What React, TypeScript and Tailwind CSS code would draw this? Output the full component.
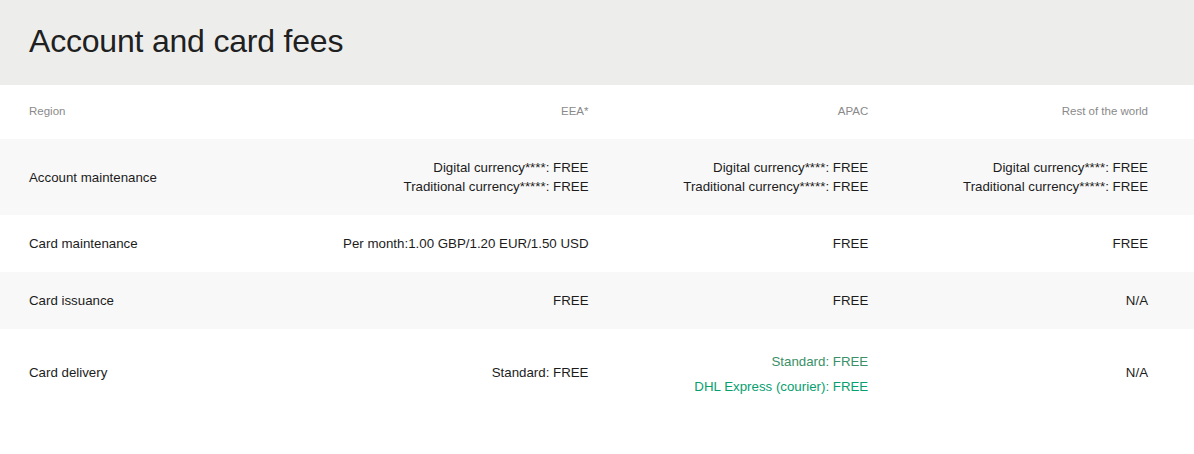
import React from 'react';

type Row = {
  label: string;
  cells: React.ReactNode[];
  shaded: boolean;
  height: string;
};

function Lines({ items }: { items: string[] }) {
  return (
    <div className="flex flex-col items-end">
      {items.map((t) => (
        <span key={t}>{t}</span>
      ))}
    </div>
  );
}

const accountLines = ['Digital currency****: FREE', 'Traditional currency*****: FREE'];

const rows: Row[] = [
  {
    label: 'Account maintenance',
    shaded: true,
    height: 'h-[76px]',
    cells: [<Lines items={accountLines} />, <Lines items={accountLines} />, <Lines items={accountLines} />],
  },
  {
    label: 'Card maintenance',
    shaded: false,
    height: 'h-[57px]',
    cells: ['Per month:1.00 GBP/1.20 EUR/1.50 USD', 'FREE', 'FREE'],
  },
  {
    label: 'Card issuance',
    shaded: true,
    height: 'h-[57px]',
    cells: ['FREE', 'FREE', 'N/A'],
  },
  {
    label: 'Card delivery',
    shaded: false,
    height: 'h-[86px]',
    cells: [
      'Standard: FREE',
      <div className="flex flex-col items-end gap-[6px] pt-[3px]">
        <span className="text-[#3a9068]">Standard: FREE</span>
        <span className="text-[#06a070]">DHL Express (courier): FREE</span>
      </div>,
      'N/A',
    ],
  },
];

export default function App() {
  return (
    <div className="w-[1194px] h-[454px] bg-white text-[#1c1c1c] font-['Liberation_Sans',Arial,sans-serif]">
      <header className="h-[85px] bg-[#edeeec] px-[29px] pt-[21px]">
        <h1 className="text-[32px] leading-[40px] font-light tracking-[-0.2px] text-[#202020]">Account and card fees</h1>
      </header>

      <div className="grid grid-cols-4 h-[54px] items-center px-[29px] pr-[46px] text-[11.5px] text-[#8a8a8a]">
        <span>Region</span>
        <span className="text-right">EEA*</span>
        <span className="text-right">APAC</span>
        <span className="text-right">Rest of the world</span>
      </div>

      {rows.map((row) => (
        <div
          key={row.label}
          className={`grid grid-cols-4 items-center px-[29px] pr-[46px] text-[13.3px] leading-[19px] ${row.height} ${
            row.shaded ? 'bg-[#f8f8f8]' : 'bg-white'
          }`}
        >
          <span>{row.label}</span>
          {row.cells.map((c, i) => (
            <div key={i} className="text-right">
              {c}
            </div>
          ))}
        </div>
      ))}
    </div>
  );
}
